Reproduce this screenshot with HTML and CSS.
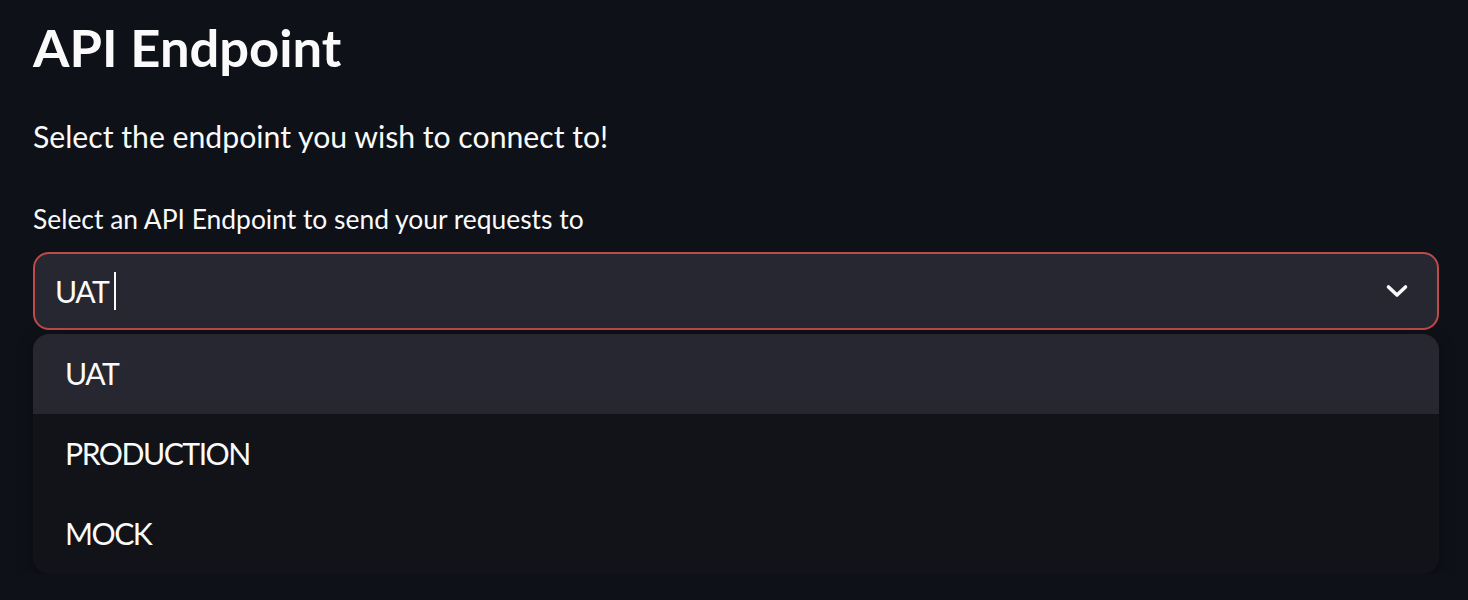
FILE: index.html
```html
<!DOCTYPE html>
<html lang="en">
<head>
<meta charset="utf-8">
<title>API Endpoint</title>
<link rel="stylesheet" href="styles.css">
</head>
<body>
<main class="page">
  <h3 class="title">API Endpoint</h3>
  <p class="lead">Select the endpoint you wish to connect to!</p>
  <label class="label">Select an API Endpoint to send your requests to</label>
  <div class="select-wrap">
    <div class="select">
      <span class="value">UAT</span><span class="caret"></span>
      <svg class="chevron" width="32" height="32" viewBox="0 0 32 32" aria-hidden="true">
        <path d="M7.5 12 L16 20 L24.5 12" fill="none" stroke="#fafafa" stroke-width="3.6" stroke-linecap="round" stroke-linejoin="round"/>
      </svg>
    </div>
    <ul class="menu">
      <li class="option active">UAT</li>
      <li class="option">PRODUCTION</li>
      <li class="option">MOCK</li>
    </ul>
  </div>
</main>
</body>
</html>
```

FILE: styles.css
```css
html, body {
  margin: 0;
  padding: 0;
  background: #0e1117;
  color: #fafafa;
  font-family: Lato, "Liberation Sans", sans-serif;
}

.page {
  width: 1406px;
  padding: 15px 0 0 33px;
}

.title {
  margin: 0;
  font-size: 52.5px;
  line-height: 1.2;
  font-weight: 700;
}

.lead {
  margin: 34px 0 0;
  font-size: 30.2px;
  line-height: 1.6;
}

.label {
  display: block;
  margin-top: 44px;
  font-size: 26.4px;
  line-height: 1.2;
}

.select-wrap {
  margin-top: 16px;
}

.select {
  box-sizing: border-box;
  height: 78px;
  border: 2px solid #bf4a4a;
  border-radius: 16px;
  background: #262730;
  display: flex;
  align-items: center;
  padding: 0 20px;
}

.value {
  font-size: 30.2px;
  letter-spacing: -1.5px;
}

.caret {
  width: 2px;
  height: 38px;
  background: #fafafa;
  margin-left: 6px;
}

.chevron {
  margin-left: auto;
  margin-right: 4px;
}

.menu {
  margin: 4px 0 0;
  padding: 0;
  list-style: none;
  background: #111318;
  border-radius: 16px;
  overflow: hidden;
  box-shadow: 0 4px 16px rgba(0, 0, 0, 0.35);
}

.option {
  height: 80px;
  display: flex;
  align-items: center;
  padding-left: 32px;
  font-size: 30.2px;
  letter-spacing: -1.5px;
  padding-bottom: 2px;
  box-sizing: border-box;
}

.option.active {
  background: #262730;
}
```
